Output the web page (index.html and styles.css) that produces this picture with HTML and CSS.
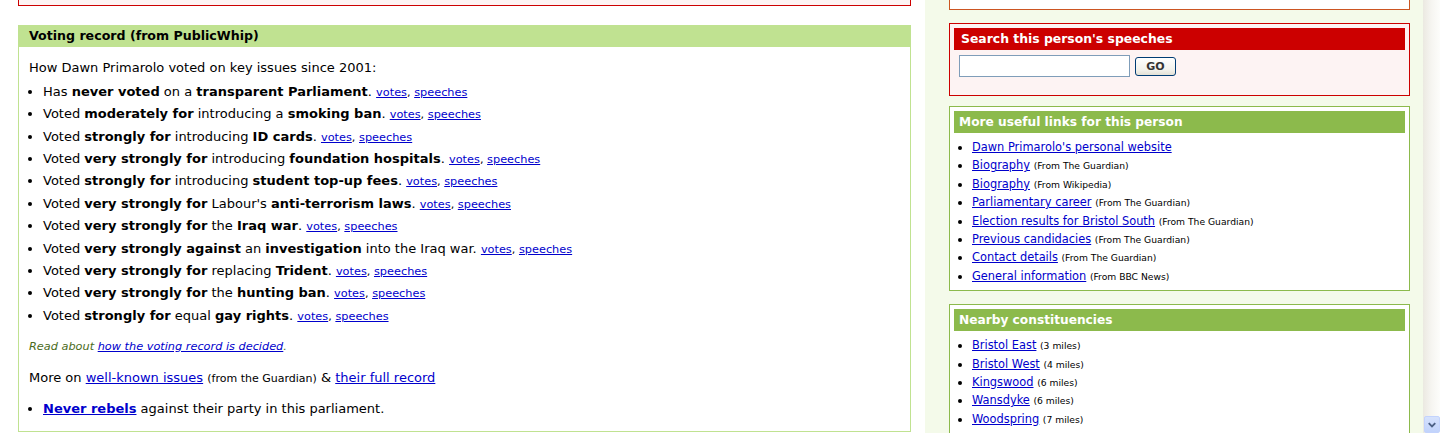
FILE: index.html
```html
<!DOCTYPE html>
<html lang="en">
<head>
<meta charset="utf-8">
<title>Dawn Primarolo</title>
<link rel="stylesheet" href="styles.css">
</head>
<body>
<div class="page">
  <div class="main">
    <div class="cut-box"></div>
    <div class="vote-box">
      <h3 class="vote-head">Voting record (from PublicWhip)</h3>
      <div class="vote-body">
        <p class="intro">How Dawn Primarolo voted on key issues since 2001:</p>
        <ul class="votes">
          <li>Has <b>never voted</b> on a <b>transparent Parliament</b>. <span class="sm"><a href="#">votes</a>, <a href="#">speeches</a></span></li>
          <li>Voted <b>moderately for</b> introducing a <b>smoking ban</b>. <span class="sm"><a href="#">votes</a>, <a href="#">speeches</a></span></li>
          <li>Voted <b>strongly for</b> introducing <b>ID cards</b>. <span class="sm"><a href="#">votes</a>, <a href="#">speeches</a></span></li>
          <li>Voted <b>very strongly for</b> introducing <b>foundation hospitals</b>. <span class="sm"><a href="#">votes</a>, <a href="#">speeches</a></span></li>
          <li>Voted <b>strongly for</b> introducing <b>student top-up fees</b>. <span class="sm"><a href="#">votes</a>, <a href="#">speeches</a></span></li>
          <li>Voted <b>very strongly for</b> Labour's <b>anti-terrorism laws</b>. <span class="sm"><a href="#">votes</a>, <a href="#">speeches</a></span></li>
          <li>Voted <b>very strongly for</b> the <b>Iraq war</b>. <span class="sm"><a href="#">votes</a>, <a href="#">speeches</a></span></li>
          <li>Voted <b>very strongly against</b> an <b>investigation</b> into the Iraq war. <span class="sm"><a href="#">votes</a>, <a href="#">speeches</a></span></li>
          <li>Voted <b>very strongly for</b> replacing <b>Trident</b>. <span class="sm"><a href="#">votes</a>, <a href="#">speeches</a></span></li>
          <li>Voted <b>very strongly for</b> the <b>hunting ban</b>. <span class="sm"><a href="#">votes</a>, <a href="#">speeches</a></span></li>
          <li>Voted <b>strongly for</b> equal <b>gay rights</b>. <span class="sm"><a href="#">votes</a>, <a href="#">speeches</a></span></li>
        </ul>
        <p class="readabout">Read about <a href="#">how the voting record is decided</a>.</p>
        <p class="moreon">More on <a href="#">well-known issues</a> <span class="from">(from the Guardian)</span> &amp; <a href="#">their full record</a></p>
        <ul class="votes rebels">
          <li><a href="#" class="rebel">Never rebels</a> against their party in this parliament.</li>
        </ul>
      </div>
    </div>
  </div>

  <div class="side">
    <div class="side-cut"></div>

    <div class="search-box">
      <h4 class="search-head">Search this person's speeches</h4>
      <form class="search-form">
        <input type="text" class="search-input">
        <button type="button" class="go-btn">GO</button>
      </form>
    </div>

    <div class="gbox">
      <h4 class="ghead">More useful links for this person</h4>
      <ul class="glist">
        <li><a href="#">Dawn Primarolo's personal website</a></li>
        <li><a href="#">Biography</a> <span class="src">(From The Guardian)</span></li>
        <li><a href="#">Biography</a> <span class="src">(From Wikipedia)</span></li>
        <li><a href="#">Parliamentary career</a> <span class="src">(From The Guardian)</span></li>
        <li><a href="#">Election results for Bristol South</a> <span class="src">(From The Guardian)</span></li>
        <li><a href="#">Previous candidacies</a> <span class="src">(From The Guardian)</span></li>
        <li><a href="#">Contact details</a> <span class="src">(From The Guardian)</span></li>
        <li><a href="#">General information</a> <span class="src">(From BBC News)</span></li>
      </ul>
    </div>

    <div class="gbox gbox2">
      <h4 class="ghead">Nearby constituencies</h4>
      <ul class="glist">
        <li><a href="#">Bristol East</a> <span class="src">(3 miles)</span></li>
        <li><a href="#">Bristol West</a> <span class="src">(4 miles)</span></li>
        <li><a href="#">Kingswood</a> <span class="src">(6 miles)</span></li>
        <li><a href="#">Wansdyke</a> <span class="src">(6 miles)</span></li>
        <li><a href="#">Woodspring</a> <span class="src">(7 miles)</span></li>
      </ul>
    </div>
  </div>

  <div class="scrollbar">
    <div class="sb-track"></div>
    <div class="sb-down">
      <svg width="15" height="16" viewBox="0 0 15 16"><path d="M4 6 L7.5 9.5 L11 6" fill="none" stroke="#4d6185" stroke-width="2"/></svg>
    </div>
  </div>
</div>
</body>
</html>
```
FILE: styles.css
```css
html, body {
  margin: 0;
  padding: 0;
  background: #ffffff;
}
body {
  font-family: "DejaVu Sans", Verdana, sans-serif;
  color: #000;
  height: 433px;
  overflow: hidden;
}
a { color: #0000cc; }

.page {
  display: flex;
  height: 433px;
  overflow: hidden;
}

/* ---------- main column ---------- */
.main {
  flex: none;
  width: 893px;
  margin-left: 18px;
}
.cut-box {
  height: 5px;
  border: 1px solid #cc0000;
  border-top: 0;
  background: #fdf3f3;
}
.vote-box {
  margin-top: 19px;
  border: 1px solid #c0e291;
  border-top: 0;
}
.vote-head {
  margin: 0;
  height: 22px;
  line-height: 22px;
  padding-left: 10px;
  background: #c0e291;
  font-size: 12.6px;
  font-weight: bold;
}
.vote-body {
  padding: 0 10px 10.8px;
  font-size: 13px;
}
.intro {
  margin: 12px 0 0;
  line-height: 18px;
}
.votes {
  margin: 3.8px 0 0;
  padding-left: 14px;
}
.votes li {
  height: 22.4px;
  line-height: 22.4px;
}
.sm {
  font-size: 11.3px;
  line-height: 1;
}
.readabout {
  margin: 11.8px 0 0;
  height: 16px;
  line-height: 16px;
  font-size: 11.3px;
  font-style: italic;
  color: #4b6b1c;
}
.moreon {
  margin: 14px 0 0;
  height: 18px;
  line-height: 18px;
}
.from {
  font-size: 11px;
  line-height: 1;
}
.rebels { margin-top: 10.8px; }
.rebel { font-weight: bold; }

/* ---------- sidebar ---------- */
.side {
  flex: none;
  width: 498px;
  box-sizing: border-box;
  margin-left: 14px;
  padding: 0 13px 0 24px;
  background: #f4faea;
}
.side-cut {
  height: 9px;
  border: 1px solid #cc5522;
  border-top: 0;
  background: #fff;
}
.search-box {
  margin-top: 13px;
  border: 1px solid #cc0000;
  background: #fdf3f3;
  padding: 4px;
}
.search-head {
  margin: 0;
  height: 22px;
  line-height: 22px;
  padding-left: 7px;
  background: #cc0000;
  color: #fff;
  font-size: 12.4px;
  font-weight: bold;
}
.search-form {
  display: flex;
  align-items: center;
  gap: 5px;
  margin: 5px 0 14px 5px;
  height: 22px;
}
.search-input {
  box-sizing: border-box;
  width: 171px;
  height: 22px;
  margin: 0;
  border: 1px solid #7f9db9;
  background: #fff;
  padding: 0 3px;
}
.go-btn {
  box-sizing: border-box;
  width: 41px;
  height: 19px;
  margin: 0;
  padding: 0;
  border: 1px solid #003c74;
  border-radius: 3px;
  background: linear-gradient(#ffffff, #f2f1eb 70%, #e3e1d6);
  font-family: "DejaVu Sans", Verdana, sans-serif;
  font-size: 11px;
  font-weight: bold;
  color: #333;
}

.gbox {
  margin-top: 10px;
  border: 1px solid #8cba4c;
  background: #fff;
  padding: 4px 4px 3px;
}
.gbox2 { margin-top: 13px; }
.ghead {
  margin: 0;
  height: 22px;
  line-height: 22px;
  padding-left: 5px;
  background: #8cba4c;
  color: #fff;
  font-size: 12.2px;
  font-weight: bold;
}
.glist {
  margin: 5px 0 2px;
  padding-left: 18px;
  font-size: 11.4px;
}
.glist li {
  height: 18.4px;
  line-height: 18.4px;
}
.src {
  font-size: 9.2px;
  line-height: 1;
}

/* ---------- scrollbar ---------- */
.scrollbar {
  flex: none;
  width: 17px;
  display: flex;
  flex-direction: column;
  background: linear-gradient(to right, #ebe9e1, #f6f5f1 50%, #fdfdfb);
}
.sb-track { flex: 1; }
.sb-down {
  box-sizing: border-box;
  height: 17px;
  margin-left: 1px;
  width: 16px;
  border: 1px solid #c3d3fd;
  border-radius: 2px;
  background: linear-gradient(#d6e2fd, #c1d3fb);
  display: flex;
  align-items: center;
  justify-content: center;
}
.sb-down svg { display: block; }
```
